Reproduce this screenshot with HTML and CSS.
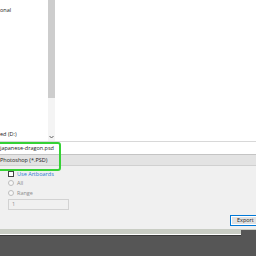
FILE: index.html
```html
<!DOCTYPE html>
<html>
<head>
    <title>Export As</title>
    <meta charset="utf-8">
    <link rel="stylesheet" href="styles.css">
</head>
<body>
    <div id="dlg">
        <div class="browser">
            <div class="nav">
                <div class="navitem top">onal</div>
                <div class="navitem drive">ed (D:)</div>
            </div>
            <div class="scroll">
                <div class="thumb"></div>
                <div class="track"></div>
                <div class="arrow">
                    <svg width="7" height="8" viewBox="0 0 7 8"><path d="M1.5 3 L3.5 5 L5.5 3" fill="none" stroke="#606060" stroke-width="1"/></svg>
                </div>
            </div>
            <div class="files"></div>
        </div>
        <div class="fname">japanese-dragon.psd</div>
        <div class="ftype">Photoshop (*.PSD)</div>
        <div class="opts">
            <div class="row"><span class="chk"></span><span class="lbl blue">Use Artboards</span></div>
            <div class="row"><span class="rad"></span><span class="lbl dim">All</span></div>
            <div class="row"><span class="rad"></span><span class="lbl dim">Range</span></div>
            <div class="range">1</div>
        </div>
        <div class="foot">
            <div class="btn">Export</div>
        </div>
        <div class="hilite"></div>
    </div>
    <div class="behind"></div>
</body>
</html>
```
FILE: styles.css
```css
body{
    margin:0;
    width:256px;
    height:256px;
    overflow:hidden;
    background:#565656;
    font-family:"Open Sans","Noto Sans",sans-serif;
    font-size:5.5px;
    color:#222;
}
#dlg{
    position:relative;
    height:229px;
    background:#f0f0f0;
    border-bottom:1px solid #c9cdc4;
    display:flex;
    flex-direction:column;
}
.browser{
    height:141px;
    display:flex;
    background:#fff;
}
.nav{
    width:48px;
    position:relative;
}
.navitem{
    position:absolute;
    left:0;
    line-height:6px;
}
.navitem.top{ top:7px; }
.navitem.drive{ top:131px; }
.scroll{
    width:7px;
    display:flex;
    flex-direction:column;
    background:#f4f4f4;
}
.thumb{
    height:98px;
    background:#cdcdcd;
}
.track{ flex:1; }
.arrow{
    height:8px;
}
.arrow svg{ display:block; }
.files{ flex:1; }
.fname{
    height:12px;
    line-height:12px;
    background:#fff;
    border-top:1px solid #d8d8d8;
    border-bottom:1px solid #c4c4c4;
}
.ftype{
    height:10px;
    line-height:10px;
    background:#e3e3e3;
    border-bottom:1px solid #d0d0d0;
}
.opts{
    flex:1;
    padding:5px 0 0 8px;
}
.row{
    display:flex;
    align-items:center;
    height:5px;
    margin-bottom:4.5px;
}
.chk{
    width:4px;
    height:4px;
    border:1px solid #444;
    background:#fff;
}
.rad{
    width:4px;
    height:4px;
    border:1px solid #bdbdbd;
    border-radius:50%;
    background:#f7f7f7;
}
.lbl{ margin-left:3px; }
.blue{ color:#2d7bd0; }
.dim{ color:#8d8d8d; }
.range{
    width:56px;
    height:9px;
    line-height:9px;
    margin-top:-1px;
    border:1px solid #d2d2d2;
    padding-left:3px;
    color:#8d8d8d;
}
.foot{
    height:14px;
    display:flex;
    justify-content:flex-end;
}
.btn{
    width:24px;
    height:9px;
    line-height:9px;
    margin-right:-6px;
    border:1px solid #0078d7;
    background:#e1e1e1;
    padding-left:6px;
    box-shadow:inset 0 0 0 1px #fff;
}
.hilite{
    position:absolute;
    left:-6px;
    top:142px;
    width:63px;
    height:25px;
    border:2px solid #35d135;
    border-radius:3px;
}
.behind{
    width:241px;
    height:4px;
    background:#c9cdc4;
    border-bottom:1px solid #fff;
    box-shadow:0 1px 0 #3a3a3a;
}
```
